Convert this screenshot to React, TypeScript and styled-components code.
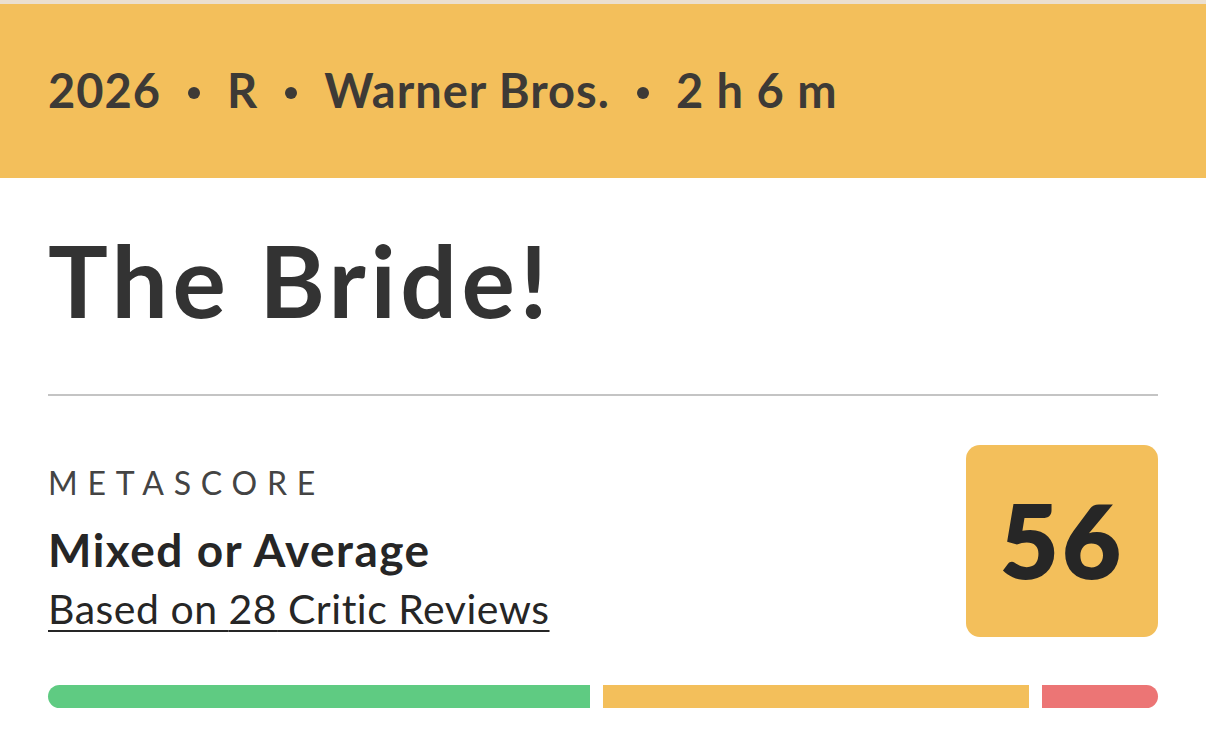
import styled, {createGlobalStyle} from 'styled-components'

const GlobalStyle = createGlobalStyle`
  html, body {
    margin: 0;
    padding: 0;
    background: #ffffff;
  }
  body {
    font-family: Lato, 'Open Sans', 'Liberation Sans', sans-serif;
    color: #333333;
  }
`

const movie = {
  year: '2026',
  rating: 'R',
  studio: 'Warner Bros.',
  runtime: '2 h 6 m',
  title: 'The Bride!',
  score: 56,
  verdict: 'Mixed or Average',
  reviews: 28,
  split: {positive: 14, mixed: 11, negative: 3},
}

function App() {
  const facts = [movie.year, movie.rating, movie.studio, movie.runtime]
  const {positive, mixed, negative} = movie.split

  return (
    <>
      <GlobalStyle />
      <Page>
        <TopEdge />
        <Banner>
          {facts.map((f, i) => (
            <Fact key={f}>
              {i > 0 && <Dot />}
              {f}
            </Fact>
          ))}
        </Banner>
        <Body>
          <Title>{movie.title}</Title>
          <Divider />
          <ScoreRow>
            <ScoreInfo>
              <Label>METASCORE</Label>
              <Verdict>{movie.verdict}</Verdict>
              <Reviews href="#">Based on {movie.reviews} Critic Reviews</Reviews>
            </ScoreInfo>
            <ScoreBox>{movie.score}</ScoreBox>
          </ScoreRow>
          <Distribution>
            <Segment $color="#5fcb82" style={{flexGrow: positive}} />
            <Segment $color="#f3bf5b" style={{flexGrow: mixed}} />
            <Segment $color="#ec7575" style={{flexGrow: negative}} />
          </Distribution>
        </Body>
      </Page>
    </>
  )
}

export default App

const Page = styled.div`
  width: 1206px;
  height: 746px;
  overflow: hidden;
  background: #ffffff;
`

const TopEdge = styled.div`
  height: 4px;
  background: #ebdfcf;
`

const Banner = styled.div`
  height: 174px;
  background: #f3bf5b;
  display: flex;
  align-items: center;
  padding: 0 48px 2px;
  box-sizing: border-box;
  font-size: 47px;
  font-weight: 700;
  letter-spacing: 1px;
  color: #3d3a36;
`

const Fact = styled.span`
  display: inline-flex;
  align-items: center;
  white-space: pre;
`

const Dot = styled.span`
  display: block;
  flex: 0 0 12px;
  width: 12px;
  height: 12px;
  border-radius: 6px;
  background: #3d3a36;
  margin: 6px 27px 0 27px;
`

const Body = styled.div`
  padding: 0 48px;
`

const Title = styled.h1`
  margin: 0;
  padding-top: 41px;
  height: 216px;
  box-sizing: border-box;
  font-size: 100px;
  line-height: 120px;
  font-weight: 700;
  color: #333333;
  letter-spacing: 4.5px;
`

const Divider = styled.hr`
  margin: 0;
  border: none;
  height: 2px;
  background: #c4c4c4;
`

const ScoreRow = styled.div`
  display: flex;
  justify-content: space-between;
  align-items: flex-start;
  padding-top: 49px;
`

const ScoreInfo = styled.div`
  display: flex;
  flex-direction: column;
  padding-top: 18px;
`

const Label = styled.div`
  font-size: 32px;
  line-height: 40px;
  letter-spacing: 9.8px;
  font-weight: 400;
  color: #444444;
`

const Verdict = styled.div`
  margin-top: 22px;
  font-size: 46px;
  line-height: 50px;
  font-weight: 700;
  letter-spacing: 1.5px;
  color: #262626;
`

const Reviews = styled.a`
  margin-top: 9px;
  font-size: 41px;
  line-height: 50px;
  letter-spacing: 0.5px;
  color: #262626;
  text-decoration: underline;
  text-decoration-thickness: 2px;
  text-underline-offset: 6px;
`

const ScoreBox = styled.div`
  width: 192px;
  height: 192px;
  border-radius: 14px;
  background: #f3bf5b;
  display: flex;
  align-items: center;
  justify-content: center;
  padding-bottom: 4px;
  box-sizing: border-box;
  font-size: 102px;
  font-weight: 800;
  letter-spacing: 3px;
  color: #262626;
`

const Distribution = styled.div`
  display: flex;
  gap: 13px;
  margin-top: 48px;
  height: 23px;
  & > div:first-child {
    border-radius: 12px 0 0 12px;
  }
  & > div:last-child {
    border-radius: 0 12px 12px 0;
  }
`

const Segment = styled.div<{$color: string}>`
  flex-basis: 0;
  background: ${p => p.$color};
`
